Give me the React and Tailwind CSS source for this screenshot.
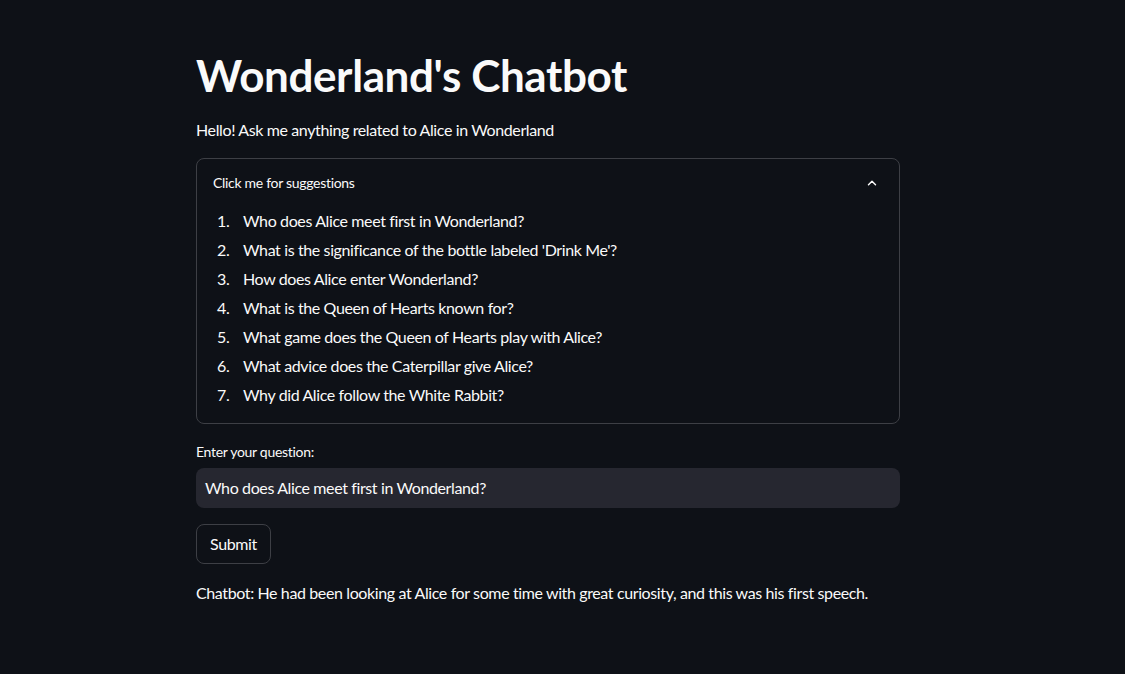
import React from "react";

const items = [
  "Who does Alice meet first in Wonderland?",
  "What is the significance of the bottle labeled 'Drink Me'?",
  "How does Alice enter Wonderland?",
  "What is the Queen of Hearts known for?",
  "What game does the Queen of Hearts play with Alice?",
  "What advice does the Caterpillar give Alice?",
  "Why did Alice follow the White Rabbit?",
];

export default function App() {
  return (
    <div
      className="min-h-[674px] w-full bg-[#0e1117] pl-[196px] text-[#fafafa]"
      style={{ fontFamily: "Lato, 'Noto Sans', sans-serif" }}
    >
      <div className="w-[704px] pt-[48px]">
        <h1 className="text-[44px] font-bold leading-[54px] tracking-[-0.4px]">Wonderland's Chatbot</h1>
        <p className="mt-[16px] text-[16px] leading-[24px] tracking-[-0.38px]">Hello! Ask me anything related to Alice in Wonderland</p>
        <div className="mt-[16px] rounded-[8px] border border-[#3d3f45]">
          <div className="flex h-[46px] items-center justify-between pl-[16px] pr-[20px] pt-[1px]">
            <span className="text-[14px] tracking-[-0.3px]">Click me for suggestions</span>
            <svg width="14" height="14" viewBox="0 0 24 24" fill="none" stroke="#fafafa" strokeWidth="2.5" strokeLinecap="round" strokeLinejoin="round">
              <path d="M6 15l6-6 6 6" />
            </svg>
          </div>
          <ol className="pb-[14px] pl-[20px] pr-[16px] pt-[1px]">
            {items.map((t, i) => (
              <li key={i} className="flex h-[29px] items-center text-[16px] tracking-[-0.38px]">
                <span className="w-[26px]">{i + 1}.</span>
                <span>{t}</span>
              </li>
            ))}
          </ol>
        </div>
        <div className="mt-[18px] text-[14px] leading-[20px] tracking-[-0.3px]">Enter your question:</div>
        <div className="mt-[6px] flex h-[40px] items-center rounded-[8px] bg-[#262730] px-[9px] text-[16px] tracking-[-0.38px]">
          Who does Alice meet first in Wonderland?
        </div>
        <button className="mt-[16px] flex h-[40px] items-center rounded-[8px] border border-[#3d3f45] px-[13px] text-[16px] tracking-[-0.38px]">
          Submit
        </button>
        <p className="mt-[17px] whitespace-nowrap text-[16px] leading-[24px] tracking-[-0.38px]">
          Chatbot: He had been looking at Alice for some time with great curiosity, and this was his first speech.
        </p>
      </div>
    </div>
  );
}
